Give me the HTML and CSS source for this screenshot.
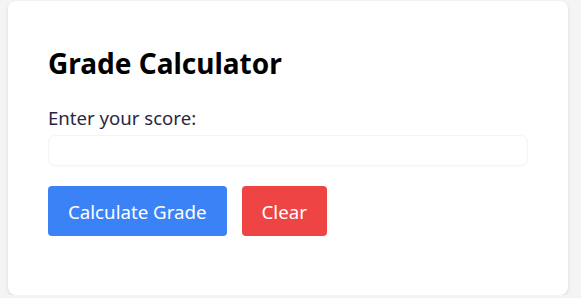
FILE: index.html
```html
<!DOCTYPE html>
<html>
<head>
<meta charset="utf-8">
<link rel="stylesheet" href="styles.css">
</head>
<body>
<div class="card">
  <h2 class="title">Grade Calculator</h2>
  <label class="label" for="score">Enter your score:</label>
  <input class="input" id="score" type="number">
  <div class="actions">
    <button class="btn btn-blue">Calculate Grade</button>
    <button class="btn btn-red">Clear</button>
  </div>
  <div class="result"></div>
</div>
</body>
</html>
```
FILE: styles.css
```css
html, body {
  margin: 0;
  background: #f3f4f6;
}
body {
  padding: 1px 13px 0 8px;
  font-family: "Noto Sans", "Open Sans", sans-serif;
}
.card {
  width: 560px;
  box-sizing: border-box;
  background: #ffffff;
  border-radius: 8px;
  box-shadow: 0 2px 4px rgba(0,0,0,0.1);
  padding: 45px 40px 40px 40px;
  height: 294px;
  display: flex;
  flex-direction: column;
}
.title {
  margin: 0 0 26px 0;
  font-size: 28px;
  font-weight: 700;
  line-height: 34px;
  color: #000;
}
.label {
  display: block;
  font-size: 18.6px;
  line-height: 24px;
  color: #2a2745;
  margin-bottom: 5px;
}
.input {
  box-sizing: border-box;
  width: 480px;
  height: 31px;
  border: 1px solid #f4f4f6;
  border-radius: 8px;
  background: #fff;
  box-shadow: 0 1px 2px rgba(0,0,0,0.03);
  outline: none;
  margin: 0 0 20px 0;
  padding: 0 8px;
}
.actions {
  display: flex;
  gap: 15px;
}
.btn {
  height: 50px;
  border: none;
  border-radius: 4px;
  color: #fff;
  font-family: "Noto Sans", "Open Sans", sans-serif;
  font-size: 18.7px;
  padding: 0 20px;
}
.btn-blue { background: #3b82f6; }
.btn-red { background: #ef4444; }
```
